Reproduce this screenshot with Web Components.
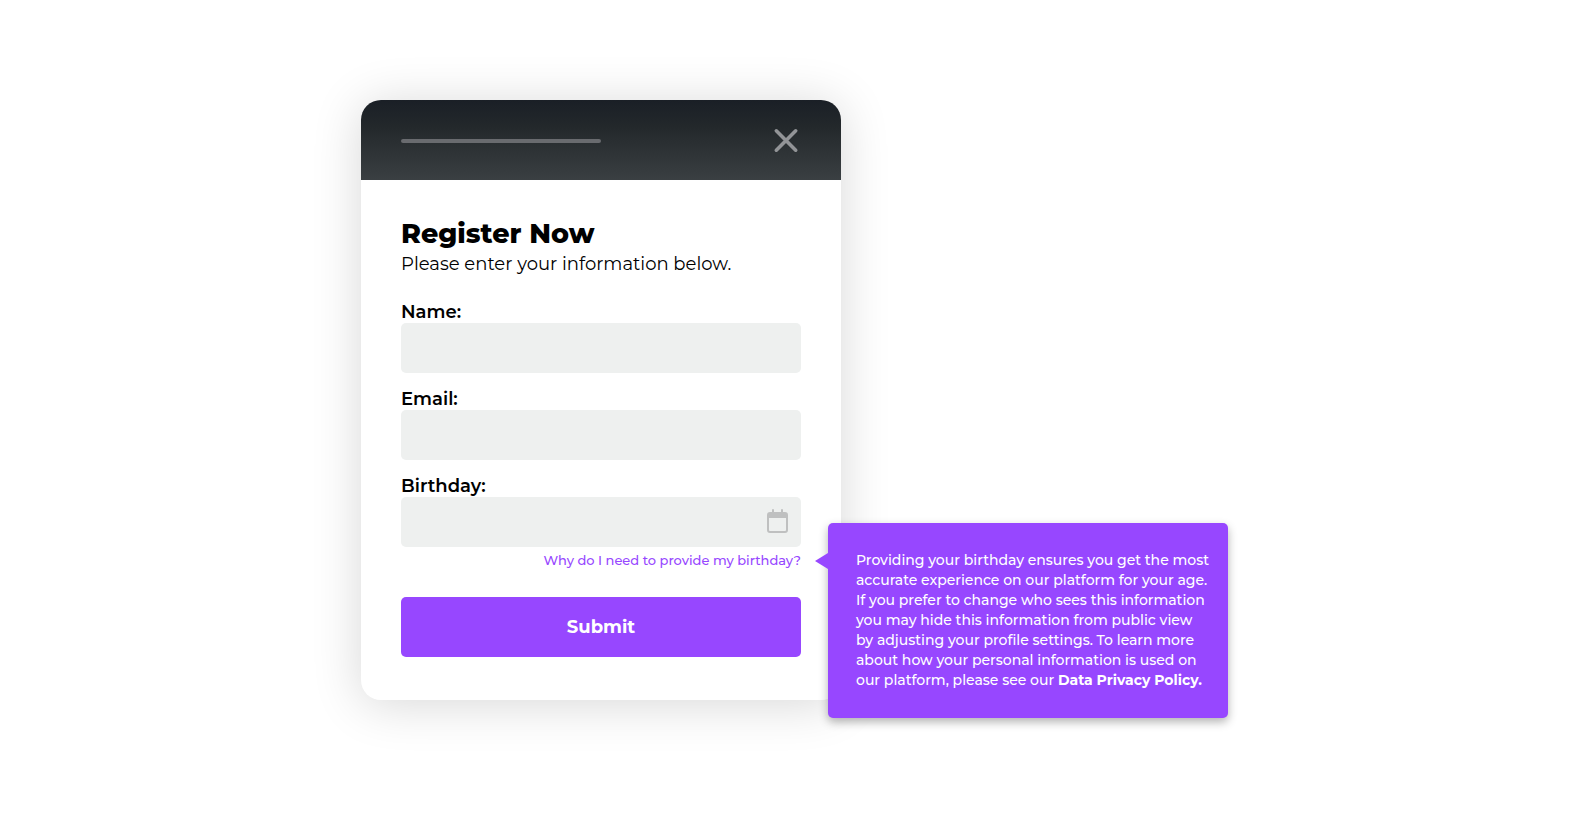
<!DOCTYPE html>
<html lang="en">
<head>
<meta charset="utf-8">
<meta name="viewport" content="width=device-width, initial-scale=1">
<title>Register Now</title>
<style>
  body {
    margin: 0;
    background: #fff;
    color: #000;
    font-family: Montserrat, Inter, "Open Sans", sans-serif;
    --accent: #9747ff;
    --field: #eef0ef;
    --radius: 5px;
  }
</style>
</head>
<body>
<register-page>
  <modal-card>
    <register-form>
      <form-field label="Name:" type="text" name="name"></form-field>
      <form-field label="Email:" type="email" name="email"></form-field>
      <form-field label="Birthday:" type="text" name="birthday" calendar>
        <help-hint slot="hint" question="Why do I need to provide my birthday?">
          <tool-tip>Providing your birthday ensures you get the most accurate experience on our platform for your age. If you prefer to change who sees this information you may hide this information from public view by adjusting your profile settings. To learn more about how your personal information is used on our platform, please see our <a href="#privacy">Data Privacy Policy.</a></tool-tip>
        </help-hint>
      </form-field>
    </register-form>
  </modal-card>
</register-page>

<script>
  const define = (name, render) => customElements.define(name, class extends HTMLElement {
    constructor() {
      super();
      this.attachShadow({ mode: "open" });
    }
    connectedCallback() {
      this.shadowRoot.innerHTML = render(this);
    }
  });

  define("register-page", () => `
    <style>
      :host { display: block; }
      main {
        box-sizing: border-box;
        min-height: 100vh;
        padding: 0 0 20px 20px;
        display: flex;
        align-items: center;
        justify-content: center;
      }
    </style>
    <main><slot></slot></main>`);

  define("modal-card", () => `
    <style>
      :host {
        display: block;
        width: 480px;
        /* room for the tooltip that extends past the card */
        margin-right: 388px;
        border-radius: 20px;
        background: #fff;
        box-shadow: 0 4px 50px rgba(0, 0, 0, .16);
      }
      header {
        box-sizing: border-box;
        height: 80px;
        padding: 2px 40px 0;
        display: flex;
        align-items: center;
        justify-content: space-between;
        border-radius: 20px 20px 0 0;
        background: linear-gradient(#1a1f26, #23282b 33%, #3a3f42);
      }
      .bar { width: 50%; height: 4px; border-radius: 2px; background: #696b6f; }
      button { width: 30px; height: 30px; padding: 0; border: 0; background: none; cursor: pointer; }
      svg { display: block; }
      section { padding: 40px 40px 43px; }
    </style>
    <header>
      <div class="bar"></div>
      <button type="button" aria-label="Close">
        <svg width="30" height="30" viewBox="0 0 30 30" fill="none" stroke="#929497" stroke-width="3.6" stroke-linecap="round"><path d="M5.3 4.8 24.7 24.2M24.7 4.8 5.3 24.2"/></svg>
      </button>
    </header>
    <section><slot></slot></section>`);

  define("register-form", () => `
    <style>
      :host { display: block; }
      h1 { margin: 0; font-size: 27px; line-height: 28px; font-weight: 800; }
      p { margin: 0 0 21px; font-size: 18px; line-height: 32px; }
      .fields { display: flex; flex-direction: column; gap: 15px; }
      .submit {
        width: 100%;
        height: 60px;
        margin-top: 27px;
        padding: 0;
        border: 0;
        border-radius: var(--radius);
        background: var(--accent);
        color: #fff;
        font: inherit;
        font-size: 18px;
        font-weight: 700;
        cursor: pointer;
      }
    </style>
    <form>
      <h1>Register Now</h1>
      <p>Please enter your information below.</p>
      <div class="fields"><slot></slot></div>
      <button class="submit" type="submit">Submit</button>
    </form>`);

  define("form-field", el => `
    <style>
      :host { display: block; }
      label { display: block; font-size: 18px; line-height: 22px; font-weight: 600; }
      .box { display: flex; align-items: center; border-radius: var(--radius); background: var(--field); }
      input {
        box-sizing: border-box;
        flex: 1;
        min-width: 0;
        height: 50px;
        padding: 0 12px;
        border: 0;
        border-radius: inherit;
        background: none;
        font: inherit;
        font-size: 18px;
      }
      button { padding: 0; margin: 0 12px 2px 0; border: 0; background: none; cursor: pointer; }
      svg { display: block; }
    </style>
    <label for="control">${el.getAttribute("label")}</label>
    <div class="box">
      <input id="control" type="${el.getAttribute("type")}" name="${el.getAttribute("name")}">
      ${el.hasAttribute("calendar") ? `
      <button type="button" aria-label="Choose a date">
        <svg width="22" height="24" viewBox="0 0 22 24" fill="#bfc0c0"><path fill-rule="evenodd" d="M5 1a1 1 0 0 1 2 0v2h7V1a1 1 0 0 1 2 0v2h2a3 3 0 0 1 3 3v15a3 3 0 0 1-3 3H3a3 3 0 0 1-3-3V6a3 3 0 0 1 3-3h2zM2 9v12a1 1 0 0 0 1 1h15a1 1 0 0 0 1-1V9z"/></svg>
      </button>` : ""}
    </div>
    <slot name="hint"></slot>`);

  define("help-hint", el => `
    <style>
      :host { display: block; position: relative; margin-top: 3px; text-align: right; }
      a { display: block; font-size: 13px; line-height: 20px; font-weight: 500; color: var(--accent); text-decoration: none; }
      .float { position: absolute; left: 100%; top: -27px; padding-left: 27px; text-align: left; }
    </style>
    <a href="#why">${el.getAttribute("question")}</a>
    <div class="float"><slot></slot></div>`);

  define("tool-tip", () => `
    <style>
      :host {
        display: block;
        box-sizing: border-box;
        position: relative;
        width: 400px;
        padding: 27px 17px 28px 28px;
        border-radius: var(--radius);
        background: var(--accent);
        color: #fff;
        font-size: 14px;
        line-height: 20px;
        font-weight: 500;
        box-shadow: 0 4px 10px rgba(0, 0, 0, .3);
      }
      :host::before {
        content: "";
        position: absolute;
        right: 100%;
        top: 30px;
        width: 13px;
        height: 16px;
        background: var(--accent);
        clip-path: polygon(0 50%, 100% 0, 100% 100%);
      }
      ::slotted(a) { color: inherit; font-weight: 700; text-decoration: none; }
    </style>
    <slot></slot>`);
</script>
</body>
</html>
